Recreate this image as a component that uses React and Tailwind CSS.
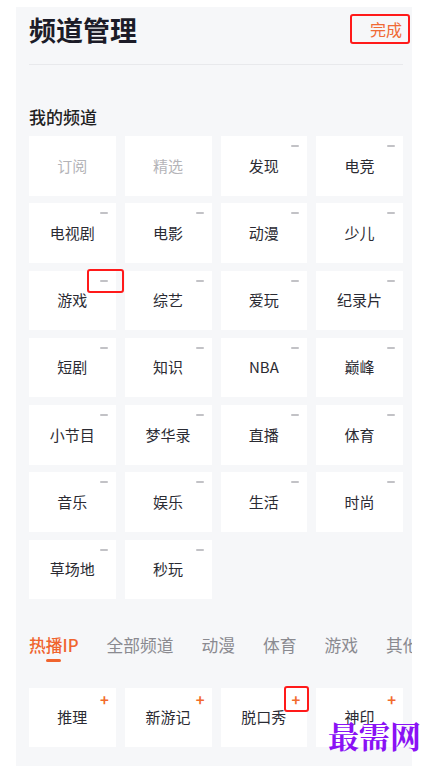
const FONT = { fontFamily: '"Noto Sans CJK SC", "Noto Sans", sans-serif' };

const MY_CHANNELS = [
  { name: "订阅", fixed: true },
  { name: "精选", fixed: true },
  { name: "发现" },
  { name: "电竞" },
  { name: "电视剧" },
  { name: "电影" },
  { name: "动漫" },
  { name: "少儿" },
  { name: "游戏", marked: true },
  { name: "综艺" },
  { name: "爱玩" },
  { name: "纪录片" },
  { name: "短剧" },
  { name: "知识" },
  { name: "NBA" },
  { name: "巅峰" },
  { name: "小节目" },
  { name: "梦华录" },
  { name: "直播" },
  { name: "体育" },
  { name: "音乐" },
  { name: "娱乐" },
  { name: "生活" },
  { name: "时尚" },
  { name: "草场地" },
  { name: "秒玩" },
];

const TABS = ["热播IP", "全部频道", "动漫", "体育", "游戏", "其他"];

const HOT_IP = [
  { name: "推理" },
  { name: "新游记" },
  { name: "脱口秀", marked: true },
  { name: "神印" },
];

function MinusCell({ item }) {
  return (
    <div className="relative flex h-[59.5px] items-center justify-center bg-white">
      <span
        className={
          item.fixed
            ? "text-[15px] text-[#b4b4b8]"
            : "text-[15px] text-[#2b2b33]"
        }
      >
        {item.name}
      </span>
      {!item.fixed && (
        <span className="absolute right-[8px] top-[9px] h-[2px] w-[8px] rounded-full bg-[#c2c2c6]" />
      )}
      {item.marked && (
        <span className="absolute right-[-8px] top-[-2px] h-[24px] w-[37px] rounded-[3px] border-2 border-[#ff1a1a]" />
      )}
    </div>
  );
}

function PlusCell({ item }) {
  return (
    <div className="relative flex h-[59px] items-center justify-center bg-white">
      <span className="text-[15px] text-[#2b2b33]">{item.name}</span>
      <span className="absolute right-[7px] top-[4px] text-[15px] font-bold leading-none text-[#f26b2c]">
        +
      </span>
      {item.marked && (
        <span className="absolute right-[-2px] top-[-2px] h-[26px] w-[25px] rounded-[3px] border-2 border-[#ff1a1a]" />
      )}
    </div>
  );
}

export default function App() {
  return (
    <div className="relative h-[766px] w-[441px] overflow-hidden bg-white" style={FONT}>
      <div className="ml-[16px] mt-[7px] h-[759px] w-[396px] overflow-hidden bg-[#f6f7f9] pl-[13px] pr-[9px]">
        <div className="relative flex h-[44px] items-center justify-between">
          <h1 className="text-[27px] font-semibold leading-none text-[#1c1c28]">频道管理</h1>
          <span className="mr-[1px] text-[16px] leading-none text-[#f06a35]">完成</span>
          <span className="absolute right-[-7px] top-[7px] h-[30px] w-[60px] rounded-[3px] border-2 border-[#ff1a1a]" />
        </div>
        <div className="mt-[13px] h-px bg-[#e8e9ec]" />

        <h2 className="mt-[40px] text-[17px] font-medium leading-[24px] text-[#222]">我的频道</h2>

        <div className="mt-[7px] grid grid-cols-4 gap-x-[9px] gap-y-[7.75px]">
          {MY_CHANNELS.map((item) => (
            <MinusCell key={item.name} item={item} />
          ))}
        </div>

        <div className="mr-[-9px] mt-[34px] flex gap-[28px] whitespace-nowrap">
          {TABS.map((tab, index) => (
            <div key={tab} className="flex shrink-0 flex-col items-center">
              <span
                className={
                  index === 0
                    ? "text-[16.75px] font-medium leading-[24px] text-[#f0642e]"
                    : "text-[16.75px] leading-[24px] text-[#8a8a90]"
                }
              >
                {tab}
              </span>
              <span
                className={
                  index === 0
                    ? "mt-[1.5px] h-[3px] w-[15px] rounded-full bg-[#f0642e]"
                    : "mt-[1.5px] h-[3px] w-[15px]"
                }
              />
            </div>
          ))}
        </div>

        <div className="mt-[26px] grid grid-cols-4 gap-x-[9px]">
          {HOT_IP.map((item) => (
            <PlusCell key={item.name} item={item} />
          ))}
        </div>
      </div>

      <div
        className="absolute left-[328px] top-[716px] text-[31px] font-bold leading-[38px] text-[#8a12f5]"
        style={{ fontFamily: '"Noto Serif CJK SC", "Noto Sans CJK SC", serif' }}
      >
        最需网
      </div>
    </div>
  );
}
